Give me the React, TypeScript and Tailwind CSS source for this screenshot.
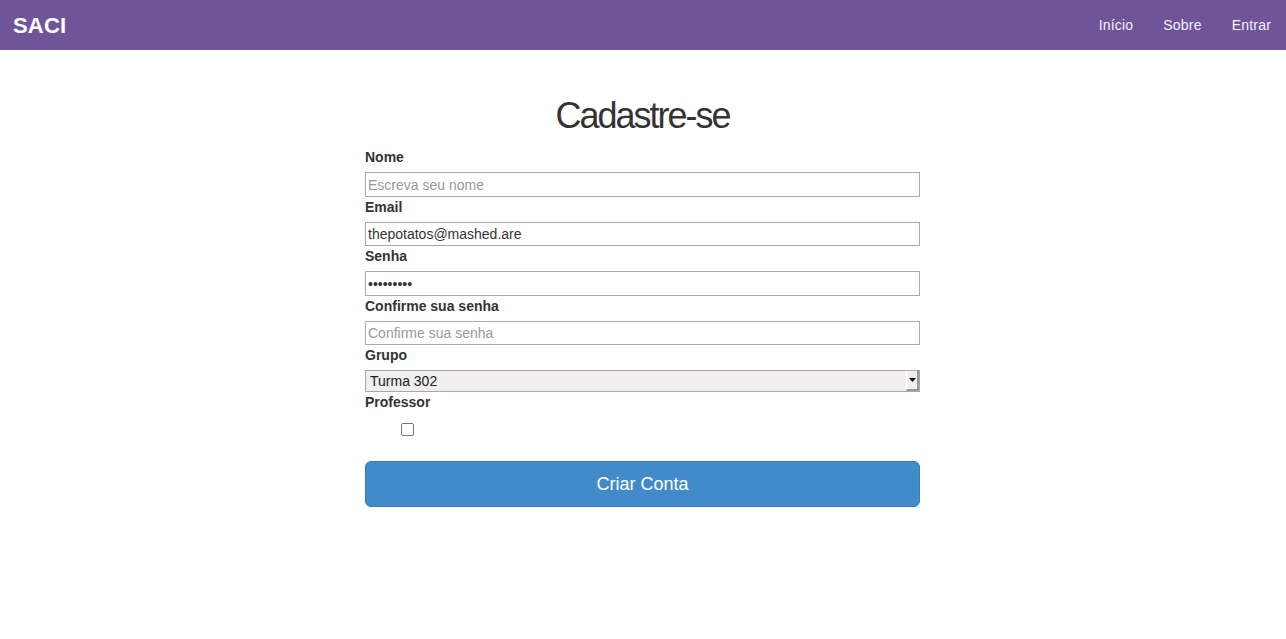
import React from "react";

const font = { fontFamily: '"Liberation Sans", Arial, Helvetica, sans-serif' };

function Label({ children }: { children: React.ReactNode }) {
  return (
    <label className="block h-[20px] mb-[5px] text-[14px] leading-[20px] font-bold text-[#333]">
      {children}
    </label>
  );
}

export default function App() {
  const inputCls =
    "block w-full border border-[#a9a9a9] bg-white px-[2px] text-[14px] leading-[20px] text-[#333] placeholder:text-[#999] outline-none";
  return (
    <div className="min-h-[639px] bg-white text-[#333]" style={font}>
      <nav className="h-[50px] bg-[#6f5499] flex items-center justify-between">
        <span className="pl-[13px] text-[22px] font-bold text-white tracking-[0.2px] leading-[49px]">SACI</span>
        <ul className="flex text-[14px] text-[#f4f0fa] tracking-[0.2px]">
          <li className="px-[15px] leading-[48px]">Início</li>
          <li className="px-[15px] leading-[48px]">Sobre</li>
          <li className="px-[15px] leading-[48px]">Entrar</li>
        </ul>
      </nav>
      <div className="w-[555px] ml-[365px]">
        <h1 className="mt-[46px] mb-[11px] text-center text-[36px] leading-[40px] tracking-[-2px] font-normal text-[#333]">
          Cadastre-se
        </h1>
        <form onSubmit={(e) => e.preventDefault()}>
          <Label>Nome</Label>
          <input className={inputCls + " h-[25px]"} placeholder="Escreva seu nome" />
          <Label>Email</Label>
          <input className={inputCls + " h-[24px]"} readOnly value="thepotatos@mashed.are" />
          <Label>Senha</Label>
          <input className={inputCls + " h-[25px]"} type="password" readOnly value="123456789" />
          <Label>Confirme sua senha</Label>
          <input className={inputCls + " h-[24px]"} type="password" placeholder="Confirme sua senha" />
          <Label>Grupo</Label>
          <div className="relative h-[22px] border border-[#a9a9a9] bg-[#f0efed] text-[14px] leading-[20px] text-[#222] pl-[4px]">
            Turma 302
            <div className="absolute right-0 top-0 h-[20px] w-[13px] bg-[#f0efed] border-r-2 border-b-2 border-[#9a9a9a] border-l border-l-white flex items-center justify-center">
              <svg width="7" height="4" viewBox="0 0 7 4">
                <path d="M0 0h7L3.5 4z" fill="#111" />
              </svg>
            </div>
          </div>
          <label className="block h-[20px] text-[14px] leading-[20px] font-bold text-[#333]">Professor</label>
          <div className="h-[49px] pt-[11px] pl-[36px]">
            <div className="w-[13px] h-[13px] border border-[#767676] rounded-[2px] bg-white" />
          </div>
          <button
            type="submit"
            className="block w-full h-[46px] rounded-[6px] border border-[#357ebd] bg-[#428bca] text-white text-[18px] leading-[24px]"
          >
            Criar Conta
          </button>
        </form>
      </div>
    </div>
  );
}
